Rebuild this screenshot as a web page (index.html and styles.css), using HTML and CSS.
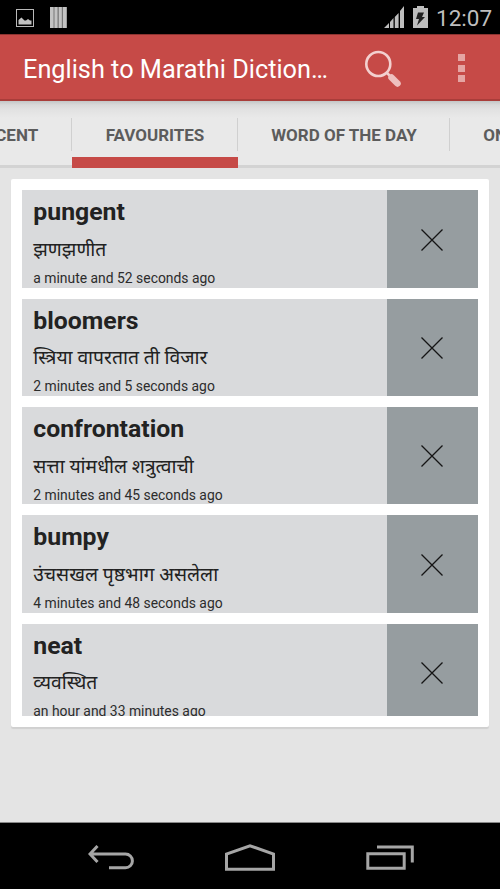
FILE: index.html
```html
<!DOCTYPE html>
<html lang="en">
<head>
  <meta charset="UTF-8" />
  <title>English to Marathi Dictionary</title>
  <meta name="viewport" content="width=device-width, initial-scale=1.0" />
  <link rel="stylesheet" href="styles.css">
</head>
<body>
  <div class="status-bar">
    <div class="status-left">
      <svg width="18" height="18" viewBox="0 0 18 18">
        <rect x="0.5" y="0.5" width="17" height="17" fill="none" stroke="#b9b9b9" />
        <path d="M2.500 15.500v-4.500l3-2.500 3 3 1.500 0 2-1.500 2 1.500 1.500 0V15.500z" fill="#c3c3c3" />
      </svg>
      <svg width="17" height="21" viewBox="0 0 17 21">
        <rect width="17" height="21" fill="#777" />
        <path d="M0 0h3.500v21H0zM4.500 0h3v21h-3zM8.800 0h3v21h-3zM13 0h3.500v21H13z" fill="#c3c3c3" />
      </svg>
    </div>
    <div class="status-right">
      <svg width="21" height="22" viewBox="0 0 21 22">
        <path d="M0 22L5 17V22zM6 22V16L9.500 12V22zM10.800 22V11L14.600 7V22zM16 22V5L20 0V22z" fill="#bebebe" />
      </svg>
      <svg width="15" height="22" viewBox="0 0 15 22">
        <path d="M4 0h7v2h4v20H0V2h4z" fill="#bebebe" />
        <path d="M5 6.500h6L9 11h3L4 19.500l2-6.500H3z" fill="#222" />
      </svg>
      <span class="clock">12:07</span>
    </div>
  </div>

  <div class="action-bar">
    <h1 class="title">English to Marathi Diction…</h1>
    <div class="actions">
      <svg class="search" width="40" height="40" viewBox="0 0 40 40">
        <circle cx="14.300" cy="14" r="12" fill="none" stroke="#f3d0cf" stroke-width="2.600" />
        <path d="M22.500 22.500l4 4" stroke="#f3d0cf" stroke-width="2.500" />
        <path d="M27.500 27.500l6 6" stroke="#eebfbe" stroke-width="6.500" stroke-linecap="round" />
      </svg>
      <div class="overflow"><i></i><i></i><i></i></div>
    </div>
  </div>

  <div class="tabs">
    <div class="tab tab-recent">RECENT</div>
    <div class="tab tab-fav active">FAVOURITES</div>
    <div class="tab tab-word">WORD OF THE DAY</div>
    <div class="tab tab-online">ONLINE</div>
  </div>

  <div class="content">
    <div class="card">
      <div class="list">
        <div class="item">
          <div class="text">
            <div class="word">pungent</div>
            <div class="meaning">झणझणीत</div>
            <div class="time">a minute and 52 seconds ago</div>
          </div>
          <div class="remove"><svg width="22" height="22" viewBox="0 0 22 22"><path d="M.5.5l21 21M21.500.5l-21 21" /></svg></div>
        </div>
        <div class="item">
          <div class="text">
            <div class="word">bloomers</div>
            <div class="meaning">स्त्रिया वापरतात ती विजार</div>
            <div class="time">2 minutes and 5 seconds ago</div>
          </div>
          <div class="remove"><svg width="22" height="22" viewBox="0 0 22 22"><path d="M.5.5l21 21M21.500.5l-21 21" /></svg></div>
        </div>
        <div class="item">
          <div class="text">
            <div class="word">confrontation</div>
            <div class="meaning">सत्ता यांमधील शत्रुत्वाची</div>
            <div class="time">2 minutes and 45 seconds ago</div>
          </div>
          <div class="remove"><svg width="22" height="22" viewBox="0 0 22 22"><path d="M.5.5l21 21M21.500.5l-21 21" /></svg></div>
        </div>
        <div class="item">
          <div class="text">
            <div class="word">bumpy</div>
            <div class="meaning">उंचसखल पृष्ठभाग असलेला</div>
            <div class="time">4 minutes and 48 seconds ago</div>
          </div>
          <div class="remove"><svg width="22" height="22" viewBox="0 0 22 22"><path d="M.5.5l21 21M21.500.5l-21 21" /></svg></div>
        </div>
        <div class="item">
          <div class="text">
            <div class="word">neat</div>
            <div class="meaning">व्यवस्थित</div>
            <div class="time">an hour and 33 minutes ago</div>
          </div>
          <div class="remove"><svg width="22" height="22" viewBox="0 0 22 22"><path d="M.5.5l21 21M21.500.5l-21 21" /></svg></div>
        </div>
      </div>
    </div>
  </div>

  <div class="nav-bar">
    <svg width="46" height="25" viewBox="0 0 46 25">
      <path d="M2 9H37.500A6.800 6.800 0 0 1 37.500 22.800H21M9.500 1L2 9L9.500 17" />
    </svg>
    <svg width="50" height="27" viewBox="0 0 50 27">
      <path d="M1.500 25.300V10L25 1.800L48.500 10V25.300z" />
    </svg>
    <svg width="48" height="25" viewBox="0 0 48 25">
      <path d="M1.800 8.800h36.400v14.500H1.800zM11 2H46.300V17.500" />
    </svg>
  </div>
</body>
</html>
```
FILE: styles.css
```css
* {
  box-sizing: border-box;
}

body {
  margin: 0;
  height: 889px;
  display: flex;
  flex-direction: column;
  overflow: hidden;
  background-color: #e4e4e4;
  font-family: Roboto, 'Noto Sans', sans-serif;
}

svg {
  display: block;
  flex: none;
}

.status-bar {
  height: 34px;
  flex: none;
  background-color: #000;
  display: flex;
  justify-content: space-between;
  padding: 0 9px 0 16px;
}

.status-left {
  display: flex;
  align-items: center;
  gap: 16px;
  padding-top: 1px;
}

.status-right {
  display: flex;
  align-items: center;
  gap: 8px;
}

.clock {
  color: #bebebe;
  font-size: 22.5px;
  line-height: 34px;
  width: 55px;
  padding-top: 2px;
  white-space: nowrap;
}

.action-bar {
  height: 67px;
  flex: none;
  display: flex;
  align-items: center;
  justify-content: space-between;
  padding: 0 35px 0 23px;
  background-color: #c64a47;
  border-top: 1px solid #8c3431;
  border-bottom: 2px solid #a93d3a;
}

.title {
  margin: 0;
  padding-top: 4px;
  color: #fff;
  font-size: 25.3px;
  font-weight: normal;
  white-space: nowrap;
}

.actions {
  display: flex;
  align-items: center;
}

.search {
  margin-right: 54px;
  margin-top: 5px;
}

.overflow {
  display: flex;
  flex-direction: column;
  gap: 3.5px;
  margin-top: 2px;
}

.overflow i {
  width: 7px;
  height: 7px;
  background-color: #e5a5a3;
}

.tabs {
  height: 67px;
  flex: none;
  display: flex;
  background: linear-gradient(#c3c6c6 0, #d9d9d9 4px, #e2e2e2 9px, #e9e9e9 17px);
  border-bottom: 3px solid #d3d3d3;
}

.tab {
  flex: none;
  height: 67px;
  padding-top: 1px;
  display: flex;
  align-items: center;
  justify-content: center;
  color: #5c5c5c;
  font-size: 17px;
  font-weight: bold;
  white-space: nowrap;
  /* short divider on the right side of each tab */
  background: linear-gradient(#d0d0d0, #d0d0d0) no-repeat right 17px / 1px 33px;
}

.tab-recent {
  width: 131px;
  margin-left: -59px;
}

.tab-fav {
  width: 166px;
}

.tab-word {
  width: 212px;
}

.tab-online {
  width: 126px;
}

.tab.active {
  padding-top: 12px;
  border-bottom: 11px solid #c64a47;
}

.content {
  flex: 1;
  padding: 11px 11px 0;
}

.card {
  height: 548px;
  padding: 11px;
  background-color: #fff;
  border-radius: 2px;
  box-shadow: 0 2px 1px #d0d0d0;
}

.list {
  height: 526px;
  padding-top: 0.4px;
  overflow: hidden;
  display: flex;
  flex-direction: column;
  gap: 11px;
}

.item {
  height: 97.35px;
  flex: none;
  display: flex;
  background-color: #d9dadc;
}

.text {
  flex: 1;
  padding-left: 11.3px;
  color: #222;
  white-space: nowrap;
}

.word {
  height: 41.6px;
  font-size: 24.8px;
  line-height: 44.2px;
  font-weight: bold;
}

.meaning {
  height: 35px;
  font-size: 19.3px;
  line-height: 36px;
}

.time {
  font-size: 13.9px;
  line-height: 22.6px;
  color: #2c2c2c;
}

.remove {
  width: 91px;
  padding-top: 1px;
  padding-right: 1px;
  display: flex;
  align-items: center;
  justify-content: center;
  background-color: #969da0;
}

.remove path {
  stroke: #151515;
  stroke-width: 1.3;
}

.nav-bar {
  height: 67px;
  flex: none;
  display: flex;
  align-items: center;
  justify-content: space-between;
  padding: 2px 86px 0 88px;
  background-color: #000;
  border-top: 1px solid #888;
}

.nav-bar path {
  fill: none;
  stroke: #a6a6a6;
  stroke-width: 3;
}
```
